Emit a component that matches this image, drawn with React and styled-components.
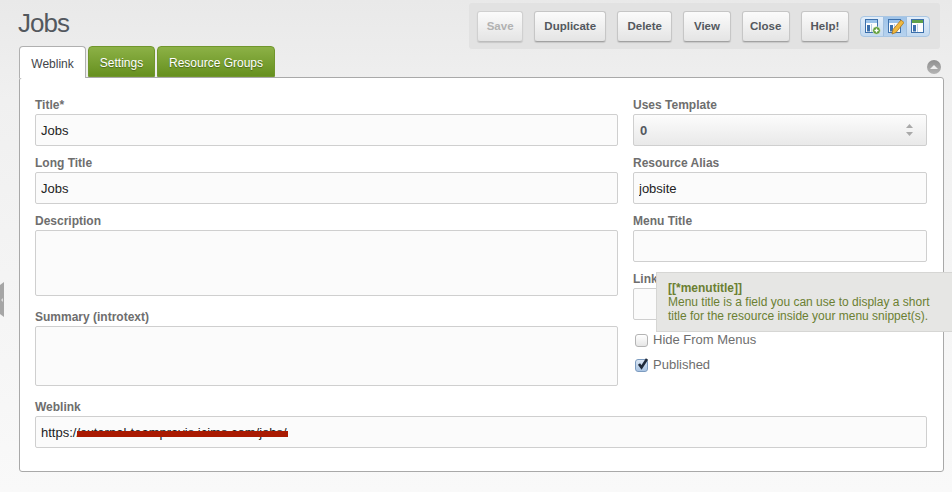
import React from 'react'
import styled, { createGlobalStyle } from 'styled-components'

const GlobalStyle = createGlobalStyle`
  html, body {
    margin: 0;
    padding: 0;
    height: 100%;
    overflow: hidden;
  }
  body {
    background: linear-gradient(to bottom, #e9e9e9 0, #f0f0f0 100px, #f9f9f9 100%);
    font-family: "Liberation Sans", Arial, sans-serif;
    color: #555;
  }
`

const Page = styled.div`
  position: relative;
  width: 952px;
  height: 492px;
  overflow: hidden;
  box-sizing: border-box;
  padding: 3px 9px 0 19px;
`

const Header = styled.div`
  display: flex;
  justify-content: space-between;
  align-items: flex-start;
  height: 43px;
`

const Title = styled.h1`
  margin: 5px 0 0 -1px;
  font-size: 26px;
  line-height: 30px;
  font-weight: 400;
  letter-spacing: -1px;
  color: #53585e;
`

const Toolbar = styled.div`
  display: flex;
  align-items: center;
  width: 471px;
  height: 46px;
  box-sizing: border-box;
  margin-right: 3px;
  padding: 0 10px 0 8px;
  background: #e2e2e2;
  border-radius: 3px;
`

const ToolButton = styled.button`
  height: 31px;
  width: ${(props) => props.w}px;
  margin-right: 11px;
  padding: 0;
  border: 1px solid ${(props) => (props.disabled ? '#d0d0d0' : '#c6c6c6')};
  border-bottom-color: ${(props) => (props.disabled ? '#bdbdbd' : '#a2a2a2')};
  border-radius: 3px;
  background: linear-gradient(to bottom, #fbfbfb, #e4e4e4);
  box-shadow: 0 1px 1px rgba(0, 0, 0, 0.12);
  font-family: inherit;
  font-size: 11.5px;
  font-weight: 700;
  color: ${(props) => (props.disabled ? '#b2b2b2' : '#53585e')};
`

const IconGroup = styled.div`
  display: flex;
  width: 71px;
  height: 21px;
  box-sizing: border-box;
  border: 1px solid #a9c6e3;
  border-radius: 4px;
  background: linear-gradient(to bottom, #e3eef9, #c4daf0);
  overflow: hidden;
`

const IconCell = styled.div`
  flex: 1;
  display: flex;
  align-items: center;
  justify-content: center;
  background: ${(props) => (props.active ? 'linear-gradient(to bottom, #9fc3e8, #b6d2ee)' : 'none')};
  border-left: ${(props) => (props.active ? '1px solid #a0bfdf' : '0')};
  border-right: ${(props) => (props.active ? '1px solid #a0bfdf' : '0')};
`

const TabRow = styled.div`
  display: flex;
  height: 32px;
  position: relative;
  z-index: 1;
`

const Tab = styled.div`
  height: ${(props) => (props.active ? '32px' : '31px')};
  width: ${(props) => props.w}px;
  margin-right: ${(props) => props.gap}px;
  box-sizing: border-box;
  display: flex;
  align-items: center;
  justify-content: center;
  padding-top: 2px;
  border-radius: 4px 4px 0 0;
  border: 1px solid ${(props) => (props.active ? '#b0b0b0' : '#71962c')};
  border-bottom: ${(props) => (props.active ? '0' : '1px solid #71962c')};
  background: ${(props) => (props.active ? '#fff' : 'linear-gradient(to bottom, #8cb146, #66901f)')};
  color: ${(props) => (props.active ? '#3f4549' : '#fff')};
  text-shadow: ${(props) => (props.active ? 'none' : '0 1px 1px rgba(0, 0, 0, 0.35)')};
  font-size: 12px;
`

const Collapse = styled.div`
  position: absolute;
  right: 11px;
  top: 60px;
  width: 14px;
  height: 14px;
  border-radius: 50%;
  background: linear-gradient(to bottom, #8f8f8f, #b4b4b4);
  display: flex;
  align-items: center;
  justify-content: center;

  &::after {
    content: '';
    border-left: 4px solid transparent;
    border-right: 4px solid transparent;
    border-bottom: 4px solid #eee;
    margin-top: -1px;
  }
`

const Panel = styled.div`
  width: 925px;
  height: 395px;
  box-sizing: border-box;
  margin-top: -1px;
  padding: 19px 16px 0 15px;
  background: #fff;
  border: 1px solid #a9a9a9;
  border-radius: 3px;
`

const Columns = styled.div`
  display: grid;
  grid-template-columns: 583px 294px;
  column-gap: 15px;
`

const Column = styled.div`
  display: flex;
  flex-direction: column;
`

const Field = styled.div`
  margin-top: ${(props) => props.top || 0}px;
  margin-bottom: ${(props) => props.bottom || 9}px;
`

const Label = styled.label`
  display: block;
  height: 16px;
  line-height: 16px;
  font-size: 12px;
  font-weight: 700;
  color: #6e6e6e;
  margin-bottom: 1px;
`

const TextInput = styled.input`
  display: block;
  width: 100%;
  height: 32px;
  box-sizing: border-box;
  padding: 0 5px;
  border: 1px solid #cfcfcf;
  border-radius: 2px;
  background: #fbfbfb;
  font-family: inherit;
  font-size: 13px;
  color: #222;
  outline: none;
`

const TextArea = styled.textarea`
  display: block;
  width: 100%;
  height: ${(props) => props.h}px;
  box-sizing: border-box;
  padding: 5px;
  border: 1px solid #cfcfcf;
  border-radius: 2px;
  background: #fbfbfb;
  resize: none;
  outline: none;
`

const SelectBox = styled.div`
  display: flex;
  align-items: center;
  justify-content: space-between;
  height: 32px;
  box-sizing: border-box;
  padding: 0 13px 0 6px;
  border: 1px solid #cfcfcf;
  border-radius: 2px;
  background: linear-gradient(to bottom, #fcfcfc, #e9e9e9);
  font-size: 13px;
  font-weight: 700;
  color: #53585e;
`

const CheckList = styled.div`
  margin-top: -2px;
`

const CheckRow = styled.label`
  display: flex;
  align-items: center;
  height: 25px;
  margin-left: 2px;
  font-size: 13px;
  color: #6e6e6e;
`

const CheckBox = styled.span`
  width: 11px;
  height: 11px;
  margin-right: 5px;
  margin-top: 2px;
  border: 1px solid ${(props) => (props.checked ? '#7d9cc0' : '#b4b4b4')};
  border-radius: 3px;
  background: ${(props) => (props.checked ? 'linear-gradient(to bottom, #dbe6f3, #a9c4e3)' : 'linear-gradient(to bottom, #fff, #e6e6e6)')};
  position: relative;
`

const LinkWrap = styled.div`
  position: relative;
`

const Redaction = styled.div`
  position: absolute;
  left: 42px;
  top: 15px;
  width: 211px;
  height: 6px;
  background: #a91a02;
`

const Tooltip = styled.div`
  position: absolute;
  left: 656px;
  top: 272px;
  width: 300px;
  height: 60px;
  box-sizing: border-box;
  padding: 8px 11px;
  background: #e6e6e4;
  border: 1px solid #d6d6d4;
  font-size: 12px;
  line-height: 14px;
  color: #6b7f32;
`

const TooltipTitle = styled.div`
  font-weight: 700;
`

const SideHandle = styled.div`
  position: absolute;
  left: 0;
  top: 282px;
  width: 4px;
  height: 35px;
  background: #a6a6a6;
  clip-path: polygon(0 3px, 100% 0, 100% 100%, 0 calc(100% - 3px));
  display: flex;
  align-items: center;

  &::after {
    content: '';
    border-top: 2px solid transparent;
    border-bottom: 2px solid transparent;
    border-right: 2px solid #dcdcdc;
    margin-left: 1px;
  }
`

const PageIcon = ({ children, head = '#9cc3ea' }) => (
  <svg width="18" height="18" viewBox="0 0 18 18">
    <rect x="2.5" y="2.5" width="12" height="13" fill="#fdfdfd" stroke="#3c70ac" />
    <rect x="3" y="3" width="11" height="3" fill={head} />
    <rect x="4" y="8" width="3" height="6.5" fill="#3c70ac" />
    <line x1="8.5" y1="7" x2="8.5" y2="15" stroke="#b9cfe6" />
    {children}
  </svg>
)

const Stepper = () => (
  <svg width="7" height="12" viewBox="0 0 7 12">
    <path d="M3.5 0 L7 4 H0 Z M3.5 12 L7 8 H0 Z" fill="#a9a9a9" />
  </svg>
)

const CheckMark = () => (
  <svg width="14" height="14" viewBox="0 0 14 14" style={{ position: 'absolute', left: 0, top: -3 }}>
    <path d="M3 7 L5.5 10.5 L11 2" fill="none" stroke="#1f2a3a" strokeWidth="2.6" />
  </svg>
)

const App = () => (
  <Page>
    <GlobalStyle />
    <Header>
      <Title>Jobs</Title>
      <Toolbar>
        <ToolButton w={47} disabled>Save</ToolButton>
        <ToolButton w={73}>Duplicate</ToolButton>
        <ToolButton w={56}>Delete</ToolButton>
        <ToolButton w={48}>View</ToolButton>
        <ToolButton w={49}>Close</ToolButton>
        <ToolButton w={49}>Help!</ToolButton>
        <IconGroup>
          <IconCell>
            <PageIcon>
              <circle cx="13.5" cy="13.5" r="3.8" fill="#5c9a35" stroke="#e8f2df" strokeWidth="0.6" />
              <path d="M13.5 11.5v4M11.5 13.5h4" stroke="#fff" strokeWidth="1.3" />
            </PageIcon>
          </IconCell>
          <IconCell active>
            <PageIcon>
              <path d="M6 17 L7 12.5 L15 3 L18 5.5 L10 15.5 Z" fill="#f0b93f" stroke="#a9761f" strokeWidth="0.8" />
            </PageIcon>
          </IconCell>
          <IconCell>
            <PageIcon head="#5fa14a" />
          </IconCell>
        </IconGroup>
      </Toolbar>
    </Header>

    <TabRow>
      <Tab active w={67} gap={2}>Weblink</Tab>
      <Tab w={67} gap={2}>Settings</Tab>
      <Tab w={118} gap={0}>Resource Groups</Tab>
    </TabRow>
    <Collapse />

    <Panel>
      <Columns>
        <Column>
          <Field>
            <Label>Title*</Label>
            <TextInput defaultValue="Jobs" />
          </Field>
          <Field>
            <Label>Long Title</Label>
            <TextInput defaultValue="Jobs" />
          </Field>
          <Field>
            <Label>Description</Label>
            <TextArea h={66} />
          </Field>
          <Field top={4} bottom={13}>
            <Label>Summary (introtext)</Label>
            <TextArea h={60} />
          </Field>
        </Column>
        <Column>
          <Field>
            <Label>Uses Template</Label>
            <SelectBox>
              0
              <Stepper />
            </SelectBox>
          </Field>
          <Field>
            <Label>Resource Alias</Label>
            <TextInput defaultValue="jobsite" />
          </Field>
          <Field>
            <Label>Menu Title</Label>
            <TextInput />
          </Field>
          <Field>
            <Label>Link</Label>
            <TextInput />
          </Field>
          <CheckList>
            <CheckRow>
              <CheckBox />
              Hide From Menus
            </CheckRow>
            <CheckRow>
              <CheckBox checked>
                <CheckMark />
              </CheckBox>
              Published
            </CheckRow>
          </CheckList>
        </Column>
      </Columns>
      <Field>
        <Label>Weblink</Label>
        <LinkWrap>
          <TextInput defaultValue="https://external-teampravis.icims.com/jobs/" />
          <Redaction />
        </LinkWrap>
      </Field>
    </Panel>

    <Tooltip>
      <TooltipTitle>[[*menutitle]]</TooltipTitle>
      Menu title is a field you can use to display a short
      <br />
      title for the resource inside your menu snippet(s).
    </Tooltip>
    <SideHandle />
  </Page>
)

export default App
